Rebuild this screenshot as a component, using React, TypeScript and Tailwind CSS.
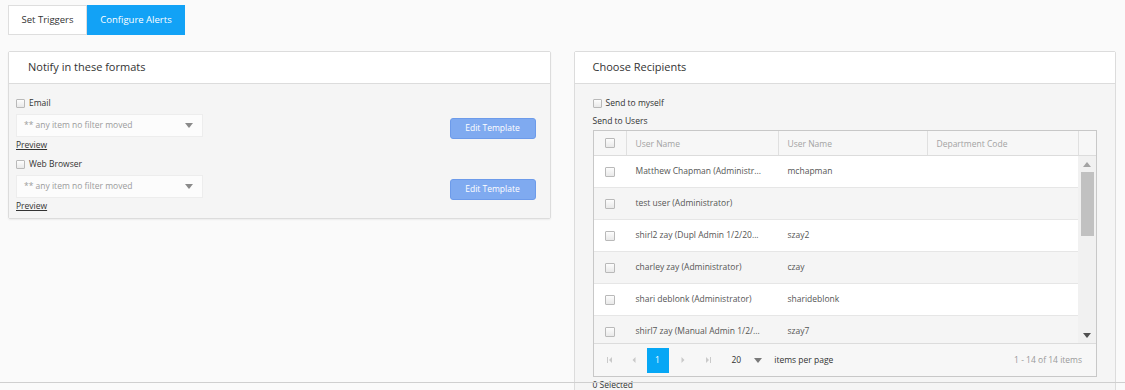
import React from "react";

const FONT = { fontFamily: '"Open Sans", "Noto Sans", "Liberation Sans", sans-serif' };

function Check({ size = 9 }: { size?: number }) {
  return (
    <span
      className="inline-block shrink-0 rounded-[1px] border border-[#b9b9b9] bg-gradient-to-b from-[#fdfdfd] to-[#e9e9e9]"
      style={{ width: size, height: size }}
    />
  );
}

function Caret({ color = "#8a8a8a" }: { color?: string }) {
  return (
    <svg width="8" height="5" viewBox="0 0 8 5" className="shrink-0">
      <path d="M0 0 L8 0 L4 5 Z" fill={color} />
    </svg>
  );
}

function FormatBlock({ label }: { label: string }) {
  return (
    <div>
      <div className="flex h-[14px] items-center gap-[4px]">
        <Check />
        <span className="text-[8.5px] text-[#333]">{label}</span>
      </div>
      <div className="mt-[4px] flex items-start justify-between">
        <div>
          <div className="flex h-[23px] w-[187px] items-center justify-between border border-[#ededed] bg-[#fcfcfc] pl-[7px] pr-[9px]">
            <span className="text-[8.5px] text-[#9b9b9b]">** any item no filter moved</span>
            <Caret />
          </div>
          <div className="flex h-[15px] items-center pt-[1px]">
            <span className="text-[8.5px] leading-none text-[#333] underline underline-offset-[1px]">Preview</span>
          </div>
        </div>
        <button className="mt-[4px] h-[21px] w-[86px] rounded-[3px] border border-[#6d9bea] bg-[#7faaf0] text-[8.5px] text-white">
          Edit Template
        </button>
      </div>
    </div>
  );
}

const rows = [
  ["Matthew Chapman (Administr...", "mchapman"],
  ["test user (Administrator)", ""],
  ["shirl2 zay (Dupl Admin 1/2/20...", "szay2"],
  ["charley zay (Administrator)", "czay"],
  ["shari deblonk (Administrator)", "sharideblonk"],
  ["shirl7 zay (Manual Admin 1/2/...", "szay7"],
];

function PagerIcon({ kind }: { kind: "first" | "prev" | "next" | "last" }) {
  const c = "#cacaca";
  return (
    <svg width="8" height="8" viewBox="0 0 8 8">
      {kind === "first" && (
        <>
          <rect x="1" y="1" width="1" height="6" fill={c} />
          <path d="M6 1 L6 7 L3 4 Z" fill={c} />
        </>
      )}
      {kind === "prev" && <path d="M5.5 1 L5.5 7 L2.5 4 Z" fill={c} />}
      {kind === "next" && <path d="M2.5 1 L2.5 7 L5.5 4 Z" fill={c} />}
      {kind === "last" && (
        <>
          <path d="M2 1 L2 7 L5 4 Z" fill={c} />
          <rect x="6" y="1" width="1" height="6" fill={c} />
        </>
      )}
    </svg>
  );
}

export default function App() {
  return (
    <div className="relative min-h-screen overflow-hidden bg-[#fafafa]" style={FONT}>
      {/* tabs */}
      <div className="flex pl-[8px] pt-[5px]">
        <div className="flex h-[30px] w-[79px] items-center justify-center border border-[#dedede] bg-white text-[9.5px] text-[#333]">
          Set Triggers
        </div>
        <div className="flex h-[30px] w-[98px] items-center justify-center bg-[#12a2f6] text-[9.5px] text-white">
          Configure Alerts
        </div>
      </div>

      <div className="mt-[16px] flex items-start gap-[23px] pl-[8px] pr-[9px]">
        {/* left panel */}
        <div className="flex-1 rounded-[2px] border border-[#dcdcdc] shadow-[0_1px_2px_rgba(0,0,0,0.06)]">
          <div className="flex h-[32px] items-center border-b border-[#dcdcdc] bg-white pl-[19px]">
            <span className="text-[11px] text-[#333]">Notify in these formats</span>
          </div>
          <div className="flex flex-col gap-[5px] bg-[#f5f5f5] pb-[5px] pl-[7px] pr-[14px] pt-[12px]">
            <FormatBlock label="Email" />
            <FormatBlock label="Web Browser" />
          </div>
        </div>

        {/* right panel */}
        <div className="flex-1 rounded-[2px] border border-[#dcdcdc] bg-[#f5f5f5]">
          <div className="flex h-[32px] items-center border-b border-[#dcdcdc] bg-white pl-[18px]">
            <span className="text-[11px] text-[#333]">Choose Recipients</span>
          </div>
          <div className="px-[18px] pt-[12px]">
            <div className="flex h-[14px] items-center gap-[4px]">
              <Check />
              <span className="text-[8.5px] text-[#333]">Send to myself</span>
            </div>
            <div className="flex h-[14px] items-center pt-[8px]">
              <span className="text-[8.5px] text-[#333]">Send to Users</span>
            </div>
            <div className="mt-[6px] border border-[#c8c8c8] bg-white">
              {/* header */}
              <div className="flex h-[25px] border-b border-[#dcdcdc] bg-[#f7f7f7] text-[8.5px] text-[#a3a3a3]">
                <div className="flex w-[33px] items-center justify-center border-r border-[#e0e0e0]">
                  <Check size={10} />
                </div>
                <div className="flex w-[152px] items-center border-r border-[#e0e0e0] pl-[9px] pt-[2px]">User Name</div>
                <div className="flex w-[149px] items-center border-r border-[#e0e0e0] pl-[9px] pt-[2px]">User Name</div>
                <div className="flex w-[151px] items-center border-r border-[#e0e0e0] pl-[9px] pt-[2px]">Department Code</div>
                <div className="flex-1" />
              </div>
              {/* body */}
              <div className="flex h-[187px]">
                <div className="flex-1 overflow-hidden">
                  {rows.map((r, i) => (
                    <div
                      key={i}
                      className={`flex h-[32px] shrink-0 items-center border-b border-[#e6e6e6] text-[8.5px] text-[#555] ${
                        i % 2 === 1 ? "bg-[#f5f5f5]" : "bg-white"
                      }`}
                    >
                      <div className="flex w-[33px] items-center justify-center">
                        <Check size={10} />
                      </div>
                      <div className="w-[152px] pl-[9px]">{r[0]}</div>
                      <div className="w-[149px] pl-[9px]">{r[1]}</div>
                      <div className="flex-1" />
                    </div>
                  ))}
                </div>
                <div className="flex w-[18px] flex-col items-center bg-[#f1f1f1]">
                  <div className="flex h-[16px] items-center justify-center">
                    <svg width="8" height="5" viewBox="0 0 8 5">
                      <path d="M0 5 L8 5 L4 0 Z" fill="#a3a3a3" />
                    </svg>
                  </div>
                  <div className="h-[64px] w-[13px] bg-[#c1c1c1]" />
                  <div className="flex-1" />
                  <div className="flex h-[16px] items-center justify-center">
                    <svg width="8" height="5" viewBox="0 0 8 5">
                      <path d="M0 0 L8 0 L4 5 Z" fill="#505050" />
                    </svg>
                  </div>
                </div>
              </div>
              {/* pager */}
              <div className="flex h-[33px] items-center border-t border-[#dcdcdc] bg-[#f7f7f7] pl-[4px] pr-[14px] text-[8.5px]">
                <div className="flex w-[24px] justify-center"><PagerIcon kind="first" /></div>
                <div className="flex w-[24px] justify-center"><PagerIcon kind="prev" /></div>
                <div className="ml-[1px] flex h-[25px] w-[22px] items-center justify-center bg-[#06a7f5] text-white">1</div>
                <div className="flex w-[28px] justify-center"><PagerIcon kind="next" /></div>
                <div className="flex w-[22px] justify-center"><PagerIcon kind="last" /></div>
                <span className="ml-[13px] text-[#333]">20</span>
                <span className="ml-[13px]"><Caret color="#7a7a7a" /></span>
                <span className="ml-[12px] text-[#333]">items per page</span>
                <span className="ml-auto text-[#9a9a9a]">1 - 14 of 14 items</span>
              </div>
            </div>
            <div className="pt-[2px] text-[8.5px] text-[#333]">0 Selected</div>
          </div>
        </div>
      </div>

      <div className="pointer-events-none absolute left-0 top-[382px] h-px w-full bg-[#cfcfcf]" />
    </div>
  );
}
